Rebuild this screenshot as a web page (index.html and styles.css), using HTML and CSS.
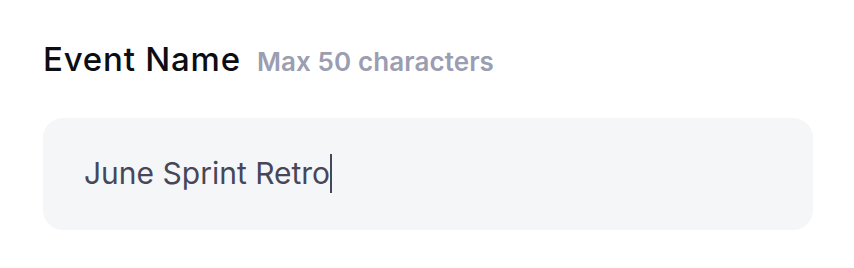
FILE: index.html
```html
<!DOCTYPE html>
<html>
<head>
<meta charset="utf-8">
<link rel="stylesheet" href="styles.css">
</head>
<body>
<div class="field">
  <div class="label-row">
    <span class="label">Event Name</span>
    <span class="hint">Max 50 characters</span>
  </div>
  <div class="input"><span class="value">June Sprint Retro</span><span class="caret"></span></div>
</div>
</body>
</html>
```
FILE: styles.css
```css
html, body {
  margin: 0;
  padding: 0;
  background: #ffffff;
  font-family: Inter, "Noto Sans", sans-serif;
}
.field {
  padding: 39px 41px 0 43px;
}
.label-row {
  display: flex;
  align-items: baseline;
  gap: 16px;
  height: 40px;
  line-height: 40px;
}
.label {
  font-size: 33px;
  font-weight: 500;
  color: #0d0d14;
  letter-spacing: 0.8px;
}
.hint {
  font-size: 26px;
  font-weight: 600;
  color: #9b9db1;
  letter-spacing: 0.1px;
}
.input {
  margin-top: 39px;
  height: 75px;
  padding-top: 37px;
  border-radius: 20px;
  background: #f5f6f8;
  display: flex;
  align-items: flex-start;
  padding-left: 41px;
}
.value {
  font-size: 30px;
  line-height: 36px;
  color: #474759;
}
.caret {
  display: inline-block;
  width: 2px;
  height: 39px;
  margin-top: -1px;
  background: #474759;
}
```
